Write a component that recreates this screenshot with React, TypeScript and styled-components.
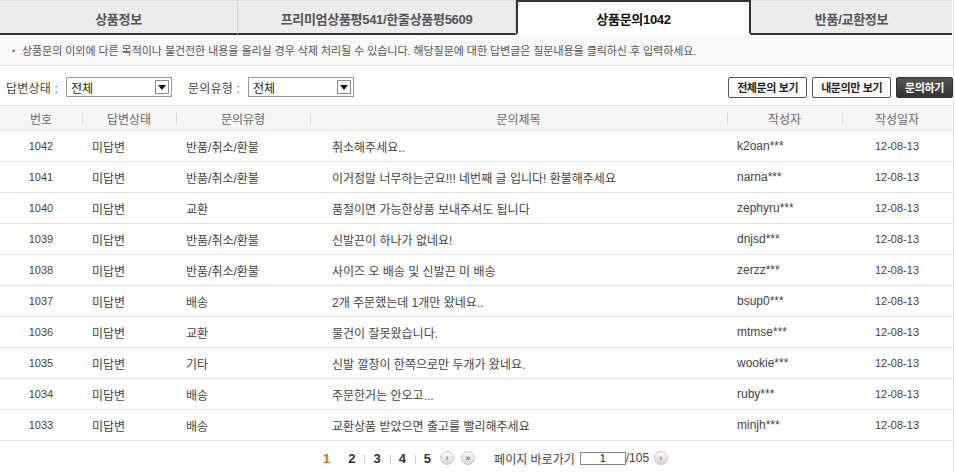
import React from "react";
import styled, { createGlobalStyle } from "styled-components";

const GlobalStyle = createGlobalStyle`
  * { box-sizing: border-box; }
  body {
    margin: 0;
    background: #fff;
    font-family: "Liberation Sans", "Noto Sans CJK KR", sans-serif;
    font-size: 12px;
    color: #444;
  }
`;

type Row = {
  no: number;
  status: string;
  kind: string;
  title: string;
  writer: string;
  date: string;
};

const rows: Row[] = [
  { no: 1042, status: "미답변", kind: "반품/취소/환불", title: "취소해주세요..", writer: "k2oan***", date: "12-08-13" },
  { no: 1041, status: "미답변", kind: "반품/취소/환불", title: "이거정말 너무하는군요!!! 네번째 글 입니다! 환불해주세요", writer: "narna***", date: "12-08-13" },
  { no: 1040, status: "미답변", kind: "교환", title: "품절이면 가능한상품 보내주셔도 됩니다", writer: "zephyru***", date: "12-08-13" },
  { no: 1039, status: "미답변", kind: "반품/취소/환불", title: "신발끈이 하나가 없네요!", writer: "dnjsd***", date: "12-08-13" },
  { no: 1038, status: "미답변", kind: "반품/취소/환불", title: "사이즈 오 배송 및 신발끈 미 배송", writer: "zerzz***", date: "12-08-13" },
  { no: 1037, status: "미답변", kind: "배송", title: "2개 주문했는데 1개만 왔네요..", writer: "bsup0***", date: "12-08-13" },
  { no: 1036, status: "미답변", kind: "교환", title: "물건이 잘못왔습니다.", writer: "mtmse***", date: "12-08-13" },
  { no: 1035, status: "미답변", kind: "기타", title: "신발 깔창이 한쪽으로만 두개가 왔네요.", writer: "wookie***", date: "12-08-13" },
  { no: 1034, status: "미답변", kind: "배송", title: "주문한거는 안오고...", writer: "ruby***", date: "12-08-13" },
  { no: 1033, status: "미답변", kind: "배송", title: "교환상품 받았으면 출고를 빨리해주세요", writer: "minjh***", date: "12-08-13" },
];

const tabs = [
  { label: "상품정보", width: 238 },
  { label: "프리미엄상품평541/한줄상품평5609", width: 278 },
  { label: "상품문의1042", width: 235, active: true },
  { label: "반품/교환정보", width: 201 },
];

const COLS = "82px 94px 134px 417px 115px 110px";

const Page = styled.div`
  width: 954px;
  border-right: 1px solid #e3e3e3;
`;

const TabBar = styled.div`
  display: flex;
  height: 35px;
`;

const Tab = styled.div<{ $active?: boolean; $w: number }>`
  width: ${(p) => p.$w}px;
  display: flex;
  align-items: center;
  justify-content: center;
  font-size: 13px;
  font-weight: bold;
  letter-spacing: -0.3px;
  background: ${(p) => (p.$active ? "#fff" : "#ececec")};
  color: ${(p) => (p.$active ? "#111" : "#555")};
  border-top: ${(p) => (p.$active ? "2px solid #333" : "1px solid #dcdcdc")};
  border-left: ${(p) => (p.$active ? "2px solid #333" : "none")};
  border-right: ${(p) => (p.$active ? "2px solid #333" : "1px solid #d4d4d4")};
  border-bottom: ${(p) => (p.$active ? "2px solid #fff" : "2px solid #333")};
  padding-top: 2px;
  &:last-child {
    border-right: none;
  }
`;

const Notice = styled.div`
  height: 31px;
  display: flex;
  align-items: center;
  padding-left: 8px;
  background: #f9f9f9;
  border-bottom: 1px solid #e2e2e2;
  font-size: 11px;
  color: #555;
  letter-spacing: -0.05px;
`;

const Filters = styled.div`
  display: flex;
  align-items: center;
  justify-content: space-between;
  height: 39px;
  padding-top: 3px;
`;

const FilterGroup = styled.div`
  display: flex;
  align-items: center;
`;

const Label = styled.span<{ $gap?: number }>`
  display: inline-block;
  width: 60px;
  font-size: 12px;
  color: #444;
  margin-left: ${(p) => p.$gap ?? 0}px;
  letter-spacing: 0.2px;
`;

const SelectBox = styled.div`
  width: 106px;
  height: 20px;
  border: 1px solid #999;
  display: flex;
  align-items: center;
  justify-content: space-between;
  padding: 0 2px 0 4px;
  font-size: 12px;
  color: #222;
  background: #fff;
`;

const Arrow = styled.span`
  width: 14px;
  height: 14px;
  border: 1px solid #888;
  display: flex;
  align-items: center;
  justify-content: center;
  &::after {
    content: "";
    border-left: 4px solid transparent;
    border-right: 4px solid transparent;
    border-top: 5px solid #111;
  }
`;

const Buttons = styled.div`
  display: flex;
  gap: 5px;
`;

const Btn = styled.button<{ $dark?: boolean }>`
  height: 21px;
  padding: 0 8px;
  font-family: inherit;
  font-size: 11px;
  font-weight: bold;
  letter-spacing: -0.4px;
  border-radius: 2px;
  border: 1px solid ${(p) => (p.$dark ? "#333" : "#555")};
  background: ${(p) => (p.$dark ? "linear-gradient(#555, #333)" : "#fff")};
  color: ${(p) => (p.$dark ? "#fff" : "#222")};
  cursor: pointer;
`;

const Grid = styled.div`
  display: grid;
  grid-template-columns: ${COLS};
`;

const HeadRow = styled(Grid)`
  height: 26px;
  background: #f6f6f6;
  border-top: 1px solid #e4e4e4;
  border-bottom: 1px solid #e4e4e4;
`;

const HeadCell = styled.div`
  display: flex;
  align-items: center;
  justify-content: center;
  position: relative;
  color: #666;
  font-size: 12px;
  & + &::before {
    content: "";
    position: absolute;
    left: 0;
    top: 7px;
    height: 11px;
    border-left: 1px solid #dcdcdc;
  }
`;

const BodyRow = styled(Grid)`
  height: 31px;
  border-bottom: 1px solid #e4e4e4;
`;

const Cell = styled.div<{ $align?: "center" | "left"; $pad?: number }>`
  display: flex;
  align-items: center;
  justify-content: ${(p) => (p.$align === "left" ? "flex-start" : "center")};
  padding-left: ${(p) => p.$pad ?? 0}px;
  font-size: ${(p) => (p.$align === "center" ? "11px" : "12px")};
  color: #444;
  white-space: nowrap;
  overflow: hidden;
`;

const Pager = styled.div`
  display: flex;
  align-items: center;
  justify-content: center;
  height: 34px;
  padding-left: 36px;
  font-size: 12px;
`;

const PageNum = styled.span<{ $on?: boolean }>`
  font-weight: bold;
  font-size: 13px;
  color: ${(p) => (p.$on ? "#f26522" : "#333")};
  padding: 0 9px;
  position: relative;
  & + &::before {
    content: "";
    position: absolute;
    left: 0;
    top: 4px;
    height: 9px;
    border-left: 1px solid #ccc;
  }
`;

const Circle = styled.span<{ $orange?: boolean }>`
  width: 14px;
  height: 14px;
  border-radius: 50%;
  background: linear-gradient(#fbfbfb, #d6d6d6);
  border: 1px solid #c8c8c8;
  display: inline-flex;
  align-items: center;
  justify-content: center;
  font-size: 9px;
  font-weight: bold;
  line-height: 1;
  color: ${(p) => (p.$orange ? "#f26522" : "#777")};
  margin-right: 7px;
`;

const Jump = styled.span`
  margin-left: 12px;
  color: #444;
  letter-spacing: 0;
`;

const PageInput = styled.span`
  display: inline-flex;
  align-items: flex-end;
  justify-content: center;
  width: 46px;
  height: 13px;
  border: 1px solid #888;
  margin-left: 5px;
  font-size: 11px;
  line-height: 11px;
  color: #222;
`;

const Total = styled.span`
  font-size: 12px;
  color: #444;
  margin-right: 5px;
`;

export default function App() {
  return (
    <>
      <GlobalStyle />
      <Page>
        <TabBar>
          {tabs.map((t) => (
            <Tab key={t.label} $w={t.width} $active={t.active}>
              {t.label}
            </Tab>
          ))}
        </TabBar>
        <Notice>
          ・ 상품문의 이외에 다른 목적이나 불건전한 내용을 올리실 경우 삭제 처리될 수 있습니다. 해당질문에 대한 답변글은 질문내용을 클릭하신 후 입력하세요.
        </Notice>
        <Filters>
          <FilterGroup>
            <Label $gap={6}>답변상태 :</Label>
            <SelectBox>
              전체
              <Arrow />
            </SelectBox>
            <Label $gap={16}>문의유형 :</Label>
            <SelectBox>
              전체
              <Arrow />
            </SelectBox>
          </FilterGroup>
          <Buttons>
            <Btn>전체문의 보기</Btn>
            <Btn>내문의만 보기</Btn>
            <Btn $dark>문의하기</Btn>
          </Buttons>
        </Filters>
        <HeadRow>
          {["번호", "답변상태", "문의유형", "문의제목", "작성자", "작성일자"].map((h) => (
            <HeadCell key={h}>{h}</HeadCell>
          ))}
        </HeadRow>
        {rows.map((r) => (
          <BodyRow key={r.no}>
            <Cell $align="center">{r.no}</Cell>
            <Cell $align="left" $pad={10}>{r.status}</Cell>
            <Cell $align="left" $pad={10}>{r.kind}</Cell>
            <Cell $align="left" $pad={22}>{r.title}</Cell>
            <Cell $align="left" $pad={10}>{r.writer}</Cell>
            <Cell $align="center">{r.date}</Cell>
          </BodyRow>
        ))}
        <Pager>
          {[1, 2, 3, 4, 5].map((n) => (
            <PageNum key={n} $on={n === 1}>
              {n}
            </PageNum>
          ))}
          <Circle>›</Circle>
          <Circle>»</Circle>
          <Jump>페이지 바로가기</Jump>
          <PageInput>1</PageInput>
          <Total>/105</Total>
          <Circle $orange>›</Circle>
        </Pager>
      </Page>
    </>
  );
}
